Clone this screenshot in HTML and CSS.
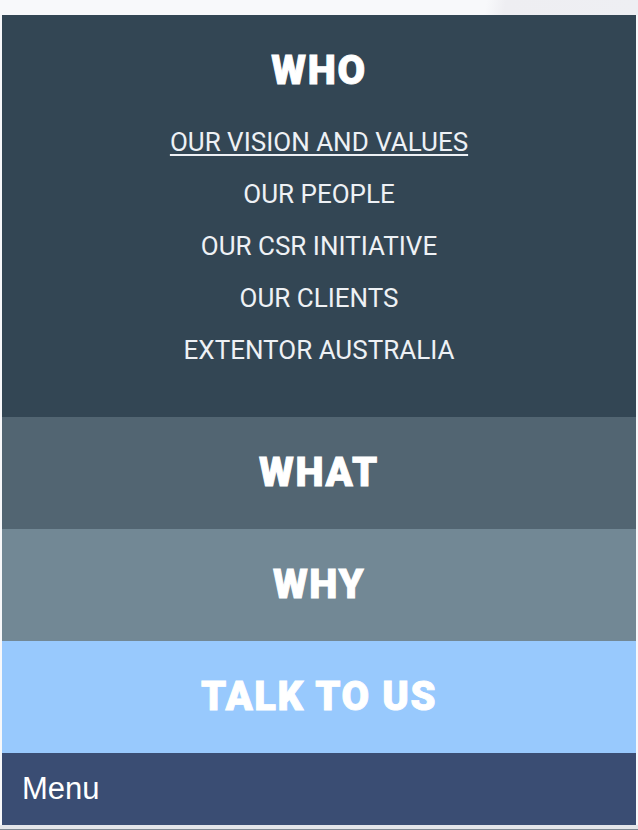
FILE: index.html
```html
<!DOCTYPE html>
<html>
<head>
<meta charset="utf-8">
<link rel="stylesheet" href="styles.css">
</head>
<body>
<div class="topbar"></div>
<nav class="nav">
  <section class="sec sec-who">
    <h2 class="sec-title">WHO</h2>
    <ul class="sub">
      <li><a class="sub-link active" href="#">OUR VISION AND VALUES</a></li>
      <li><a class="sub-link" href="#">OUR PEOPLE</a></li>
      <li><a class="sub-link" href="#">OUR CSR INITIATIVE</a></li>
      <li><a class="sub-link" href="#">OUR CLIENTS</a></li>
      <li><a class="sub-link" href="#">EXTENTOR AUSTRALIA</a></li>
    </ul>
  </section>
  <section class="sec sec-what"><h2 class="sec-title">WHAT</h2></section>
  <section class="sec sec-why"><h2 class="sec-title">WHY</h2></section>
  <section class="sec sec-talk"><h2 class="sec-title">TALK TO US</h2></section>
  <div class="menu-bar"><span class="menu-label">Menu</span></div>
</nav>
<div class="bottombar"></div>
</body>
</html>
```
FILE: styles.css
```css
html, body {
  margin: 0;
  padding: 0;
  background: #f7f8fa;
  width: 638px;
  height: 830px;
  overflow: hidden;
}
.topbar {
  height: 15px;
  background: linear-gradient(100deg, #f8f9fb 0%, #f8f9fb 76%, #eeeef2 79%, #eeeff3 100%);
}
.nav {
  margin: 0 2px;
  display: flex;
  flex-direction: column;
}
.sec {
  display: flex;
  flex-direction: column;
  align-items: center;
  font-family: Roboto, "Liberation Sans", sans-serif;
  color: #fff;
}
.sec-title {
  margin: 0;
  font-size: 40px;
  font-weight: 900;
  line-height: 112px;
  letter-spacing: 1.6px;
  -webkit-text-stroke: 0.9px #fff;
}
.sec-who {
  background: #334654;
  height: 402px;
}
.sec-who .sec-title {
  line-height: 40px;
  margin-top: 36px;
}
.sub {
  list-style: none;
  margin: 36px 0 0;
  padding: 0;
  display: flex;
  flex-direction: column;
  align-items: center;
  gap: 22px;
}
.sub li {
  display: block;
  height: 30px;
  line-height: 30px;
}
.sub-link {
  display: block;
  line-height: 30px;
  color: #eef1f5;
  text-decoration: none;
  font-size: 26px;
  font-weight: 400;
}
.sub-link.active {
  text-decoration: underline;
  text-underline-offset: 3px;
  text-decoration-thickness: 2px;
}
.sec-what { background: #526572; height: 112px; }
.sec-why { background: #728895; height: 112px; }
.sec-talk { background: #98c9fd; height: 112px; }
.menu-bar {
  background: #3a4d73;
  height: 72px;
  display: flex;
  align-items: center;
  padding-left: 20px;
}
.menu-label {
  font-family: "Liberation Sans", Arial, sans-serif;
  font-size: 31px;
  color: #fff;
}
.bottombar {
  height: 5px;
  background: linear-gradient(#e3e5e9 0%, #e3e5e9 70%, #7d8791 70%);
}
```
